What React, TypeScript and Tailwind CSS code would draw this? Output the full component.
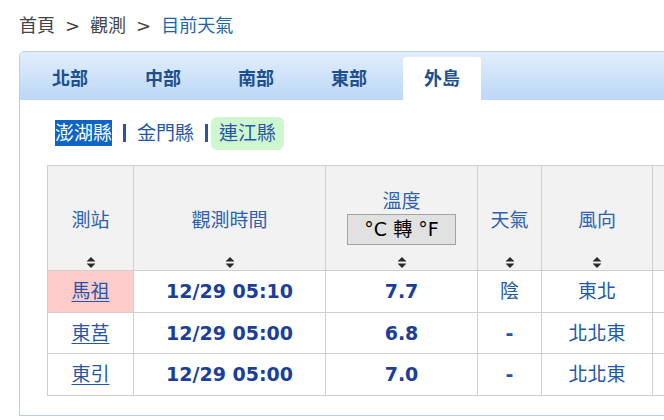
import React from "react";

const tabs = ["北部", "中部", "南部", "東部", "外島"];

const rows = [
  { name: "馬祖", time: "12/29 05:10", temp: "7.7", wx: "陰", wind: "東北", hot: true },
  { name: "東莒", time: "12/29 05:00", temp: "6.8", wx: "-", wind: "北北東", hot: false },
  { name: "東引", time: "12/29 05:00", temp: "7.0", wx: "-", wind: "北北東", hot: false },
];

function SortIcon() {
  return (
    <svg width="9" height="11" viewBox="0 0 9 11" className="absolute bottom-[2px] left-1/2 -translate-x-1/2">
      <path d="M4.5 0 L9 4.5 L0 4.5 Z" fill="#2b2b2b" />
      <path d="M0 6.5 L9 6.5 L4.5 11 Z" fill="#2b2b2b" />
    </svg>
  );
}

function Th({ children, w }: { children: React.ReactNode; w: string }) {
  return (
    <th className={`relative ${w} border border-[#cfcfcf] bg-[#f2f2f2] pt-[5px] align-middle font-normal text-[#2f62ae]`}>
      {children}
      <SortIcon />
    </th>
  );
}

export default function App() {
  return (
    <div
      className="w-[664px] h-[420px] overflow-hidden bg-white"
      style={{ fontFamily: '"DejaVu Sans", "Noto Sans CJK TC", sans-serif' }}
    >
      {/* Breadcrumb */}
      <div className="pl-[19px] pt-[12px] h-[51px] text-[18px] leading-[28px] text-[#444]">
        <span>首頁</span>
        <span className="mx-[10px]">&gt;</span>
        <span>觀測</span>
        <span className="mx-[10px]">&gt;</span>
        <span className="text-[#2163a8]">目前天氣</span>
      </div>

      {/* Panel */}
      <div className="ml-[19px] w-[720px] h-[365px] rounded-t-[5px] border border-[#b9cfe2] bg-white">
        <div className="flex h-[48px] gap-[15px] rounded-t-[4px] bg-gradient-to-b from-[#e2eefc] to-[#bcd7f6] pl-[11px] pt-[5px]">
          {tabs.map((t, i) => (
            <div
              key={t}
              className={`flex w-[78px] items-center justify-center text-[18px] font-bold text-[#1d4f8e] ${
                i === 4 ? "rounded-t-[3px] bg-white" : ""
              }`}
            >
              {t}
            </div>
          ))}
        </div>

        <div className="pl-[27px]">
          {/* County links */}
          <div className="flex h-[65px] items-center gap-[3px] pt-[1px] text-[19px] text-[#2457a8]">
            <div className="px-2 leading-[33px]">
              <span className="bg-[#0b64c6] text-white leading-[26px] inline-block">澎湖縣</span>
            </div>
            <div className="h-[18px] w-[3px] bg-[#2a55a0]" />
            <div className="px-2 leading-[33px]">金門縣</div>
            <div className="h-[18px] w-[3px] bg-[#2a55a0]" />
            <div className="rounded-[6px] bg-[#cff7cf] px-2 leading-[33px]">連江縣</div>
          </div>

          {/* Table */}
          <table className="w-[720px] table-fixed border-collapse text-center text-[19px]">
            <thead>
              <tr className="h-[105px]">
                <Th w="w-[86px]">測站</Th>
                <Th w="w-[192px]">觀測時間</Th>
                <Th w="w-[152px]">
                  <div className="leading-[22px]">溫度</div>
                  <div className="mx-auto mt-[2px] mb-[6px] flex h-[31px] w-[109px] items-center justify-center border border-[#a3a3a3] bg-[#e1e1e1] text-[19px] text-black">
                    °C 轉 °F
                  </div>
                </Th>
                <Th w="w-[64px]">天氣</Th>
                <Th w="w-[111px]">風向</Th>
                <th className="border border-[#cfcfcf] bg-[#f2f2f2]" />
              </tr>
            </thead>
            <tbody>
              {rows.map((r, i) => (
                <tr key={r.name} className={i === 1 ? "h-[41px]" : "h-[42px]"}>
                  <td className={`border border-[#cfcfcf] ${r.hot ? "bg-[#ffcccc]" : ""}`}>
                    <span className="text-[#2457a8] underline underline-offset-[3px]">{r.name}</span>
                  </td>
                  <td className="border border-[#cfcfcf] font-bold text-[#1b3e9b]">{r.time}</td>
                  <td className="border border-[#cfcfcf] font-bold text-[#1b3e9b]">{r.temp}</td>
                  <td className={`border border-[#cfcfcf] text-[#2457a8] ${r.wx === "-" ? "font-bold" : ""}`}>{r.wx}</td>
                  <td className="border border-[#cfcfcf] text-[#2457a8]">{r.wind}</td>
                  <td className="border border-[#cfcfcf]" />
                </tr>
              ))}
            </tbody>
          </table>
        </div>
      </div>
    </div>
  );
}
